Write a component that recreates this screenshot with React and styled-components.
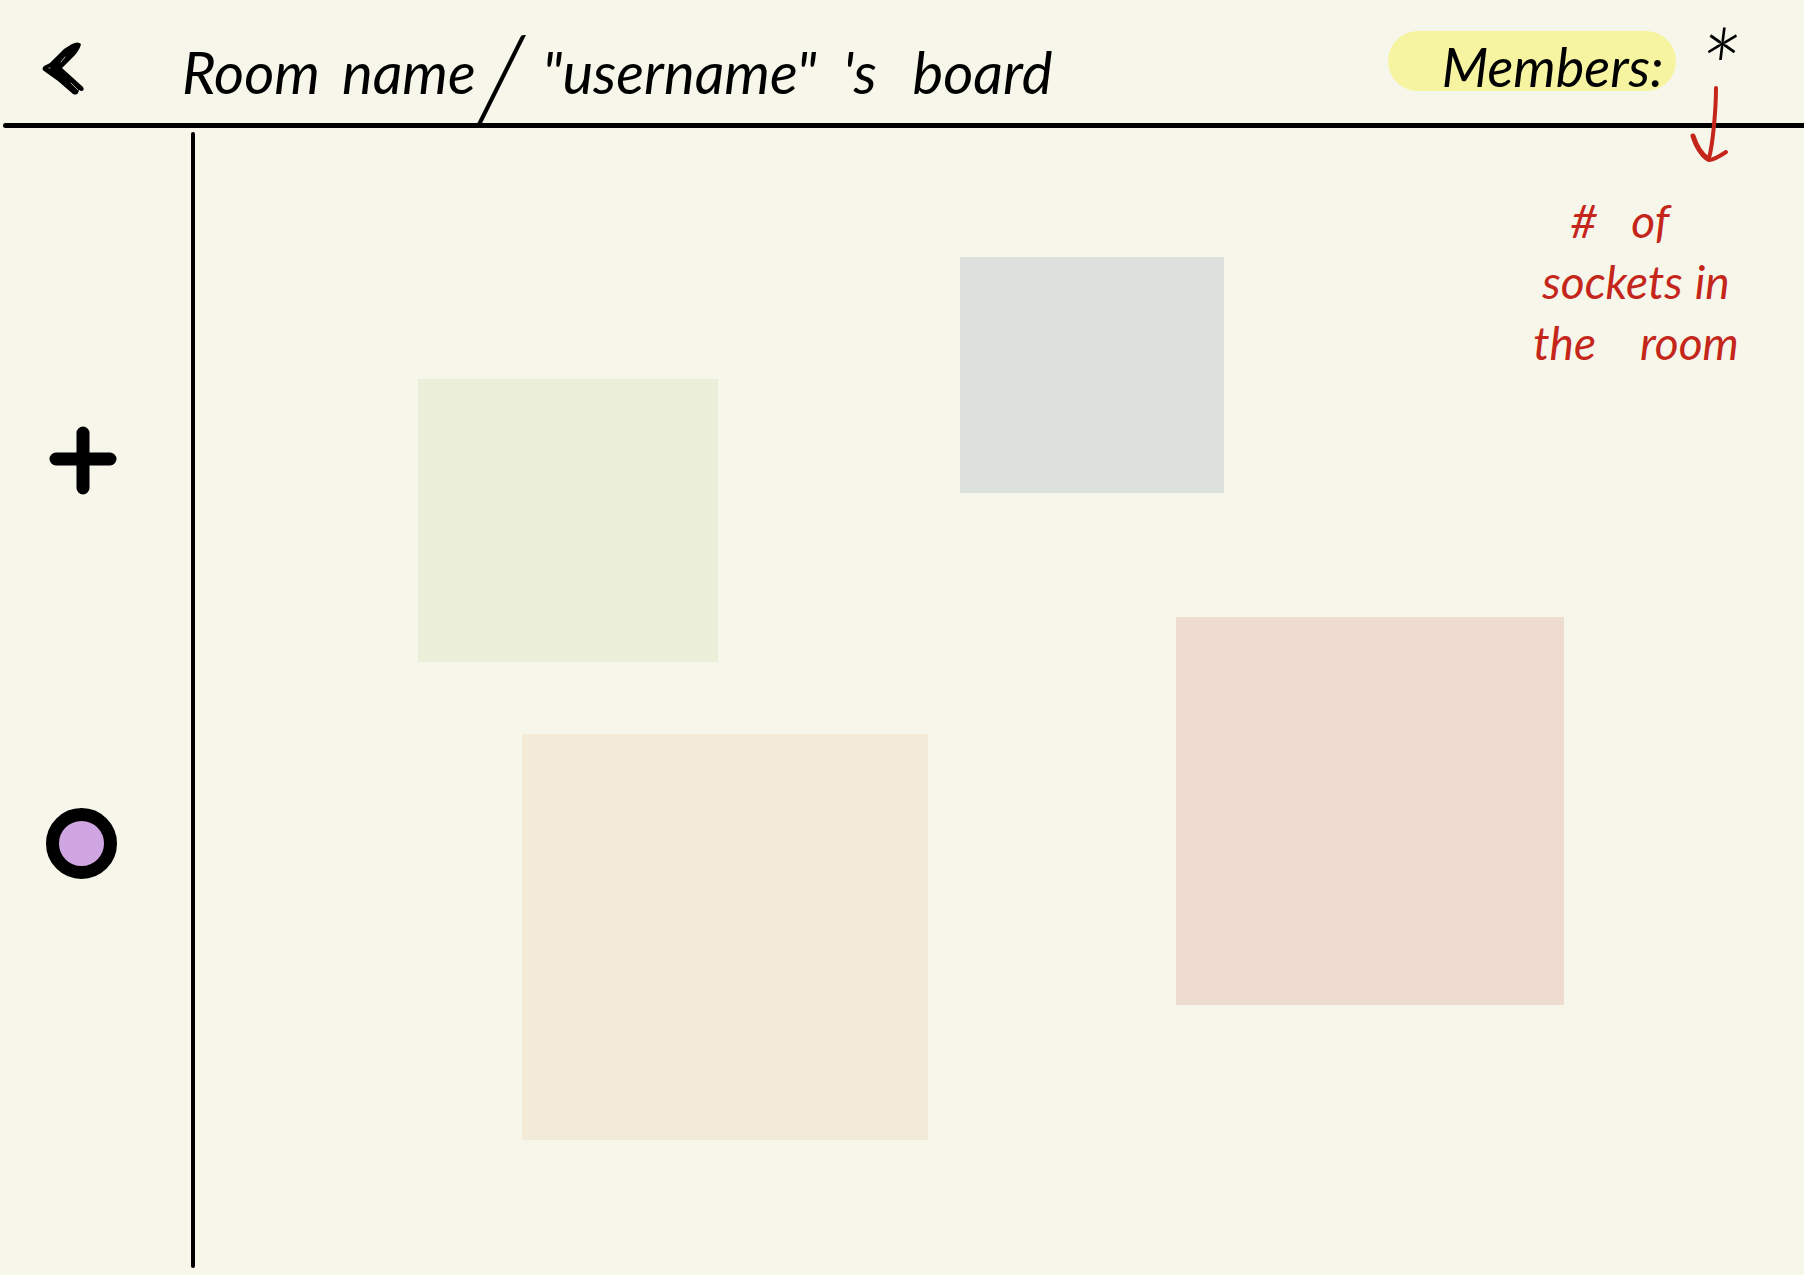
import React from 'react';
import styled, { createGlobalStyle } from 'styled-components';

const ink = '#000000';
const red = '#c5261b';
const paper = '#f6f6ea';

const GlobalStyle = createGlobalStyle`
  * { box-sizing: border-box; }
  body {
    margin: 0;
    background: ${paper};
    color: ${ink};
    font-family: Lato, "Liberation Sans", sans-serif;
    font-style: italic;
  }
  button { padding: 0; border: 0; background: none; cursor: pointer; }
`;

const Page = styled.div`
  display: flex;
  flex-direction: column;
  min-height: 100vh;
`;

const Header = styled.header`
  display: flex;
  align-items: flex-start;
  height: 123px;
  padding: 24px 64px 0 40px;
`;

const BackButton = styled.button`
  width: 48px;
  height: 56px;
  margin-top: 16px;
`;

const Title = styled.h1`
  display: flex;
  align-items: flex-start;
  flex: 1;
  margin: 0 0 0 94px;
  font-size: 58px;
  font-weight: 400;
  line-height: 96px;
  white-space: nowrap;
`;

const Word = styled.span`
  margin-left: ${(p) => p.$gap || 0}px;
`;

const Slash = styled.span`
  font-size: 120px;
  font-weight: 300;
  line-height: 104px;
`;

const Members = styled.div`
  display: flex;
  align-items: flex-start;
  gap: 22px;
`;

const Highlight = styled.span`
  margin-top: 7px;
  padding: 12px 12px 0 54px;
  border-radius: 30px;
  background: #f7f4a1;
  font-size: 54px;
  line-height: 48px;
`;

const Count = styled.span`
  font-size: 108px;
  font-weight: 300;
  line-height: 86px;
`;

const HeaderRule = styled.hr`
  width: calc(100% - 3px);
  height: 5px;
  margin: 0 0 0 3px;
  border: 0;
  border-radius: 3px 0 0 3px;
  background: ${ink};
`;

const Body = styled.div`
  display: flex;
  flex: 1;
  padding: 4px 0 7px;
`;

const Sidebar = styled.nav`
  display: flex;
  flex-direction: column;
  gap: 313px;
  width: 191px;
  padding: 292px 0 0 46px;
`;

const Divider = styled.div`
  width: 4px;
  border-radius: 2px;
  background: ${ink};
`;

const Tool = styled.button`
  width: 71px;
  height: 71px;
`;

const Swatch = styled(Tool)`
  border: 13px solid ${ink};
  border-radius: 50%;
  background: #d0a6e2;
`;

const Canvas = styled.main`
  position: relative;
  flex: 1;
`;

const Note = styled.article`
  position: absolute;
  left: ${(p) => p.$x}px;
  top: ${(p) => p.$y}px;
  width: ${(p) => p.$w}px;
  height: ${(p) => p.$h}px;
  background: ${(p) => p.$color};
`;

const Annotation = styled.aside`
  position: absolute;
  top: -48px;
  right: 60px;
  display: flex;
  flex-direction: column;
  align-items: center;
  width: 216px;
  color: ${red};
`;

const Arrow = styled.svg`
  align-self: flex-end;
  width: 48px;
  height: 80px;
  margin: 0 12px 26px 0;
`;

const Line = styled.div`
  display: flex;
  gap: ${(p) => p.$gap}px;
  padding-right: ${(p) => p.$inset || 0}px;
  font-size: 46px;
  line-height: 61px;
`;

const notes = [
  { x: 223, y: 247, w: 300, h: 283, color: '#ebefd9' },
  { x: 765, y: 125, w: 264, h: 236, color: '#dde1de' },
  { x: 981, y: 485, w: 388, h: 388, color: '#eedcd0' },
  { x: 327, y: 602, w: 406, h: 406, color: '#f3ead7' },
];

export default function App() {
  return (
    <Page>
      <GlobalStyle />
      <Header>
        <BackButton aria-label="Back">
          <svg width="48" height="56" viewBox="0 0 48 56" fill={ink} strokeLinecap="round" strokeLinejoin="round">
            <path
              d="M32 4Q38 1 41 4Q40 9 35 15L22 28 43 47Q45 51 41 51L39 50Q38 56 33 54L18 41 4 31Q1 29 4 26L10 23Q18 15 24 9Z"
            />
            <path d="M21 22 25 17M31 43 38 50" fill="none" stroke={paper} strokeWidth="1" strokeOpacity="0.7" />
            <path d="M9 28H10" fill="none" stroke={paper} strokeWidth="1" strokeOpacity="0.7" />
          </svg>
        </BackButton>
        <Title>
          <Word>Room</Word>
          <Word $gap={22}>name</Word>
          <Slash>/</Slash>
          <Word $gap={18}>"username"</Word>
          <Word $gap={26}>'s</Word>
          <Word $gap={36}>board</Word>
        </Title>
        <Members>
          <Highlight>Members:</Highlight>
          <Count>*</Count>
        </Members>
      </Header>
      <HeaderRule />
      <Body>
        <Sidebar aria-label="Board tools">
          <Tool aria-label="Add note">
            <svg width="71" height="71" viewBox="0 0 71 71" stroke={ink} strokeWidth="13" strokeLinecap="round">
              <path d="M37 9V64M10 35H64" />
            </svg>
          </Tool>
          <Swatch aria-label="Note color" />
        </Sidebar>
        <Divider />
        <Canvas>
          {notes.map((n) => (
            <Note key={n.color} $x={n.x} $y={n.y} $w={n.w} $h={n.h} $color={n.color} />
          ))}
          <Annotation>
            <Arrow viewBox="0 0 48 80" fill="none" stroke={red} strokeWidth="4" strokeLinecap="round" strokeLinejoin="round">
              <path d="M32 4C32 24 29 60 25 74" />
              <path d="M9 52Q16 72 25 76Q30 76 42 68" />
              <path d="M9 52Q14 68 24 75Q14 68 9 52" strokeWidth="5" />
            </Arrow>
            <Line $gap={34} $inset={32}><span>#</span><span>of</span></Line>
            <Line $gap={12}><span>sockets</span><span>in</span></Line>
            <Line $gap={44}><span>the</span><span>room</span></Line>
          </Annotation>
        </Canvas>
      </Body>
    </Page>
  );
}
